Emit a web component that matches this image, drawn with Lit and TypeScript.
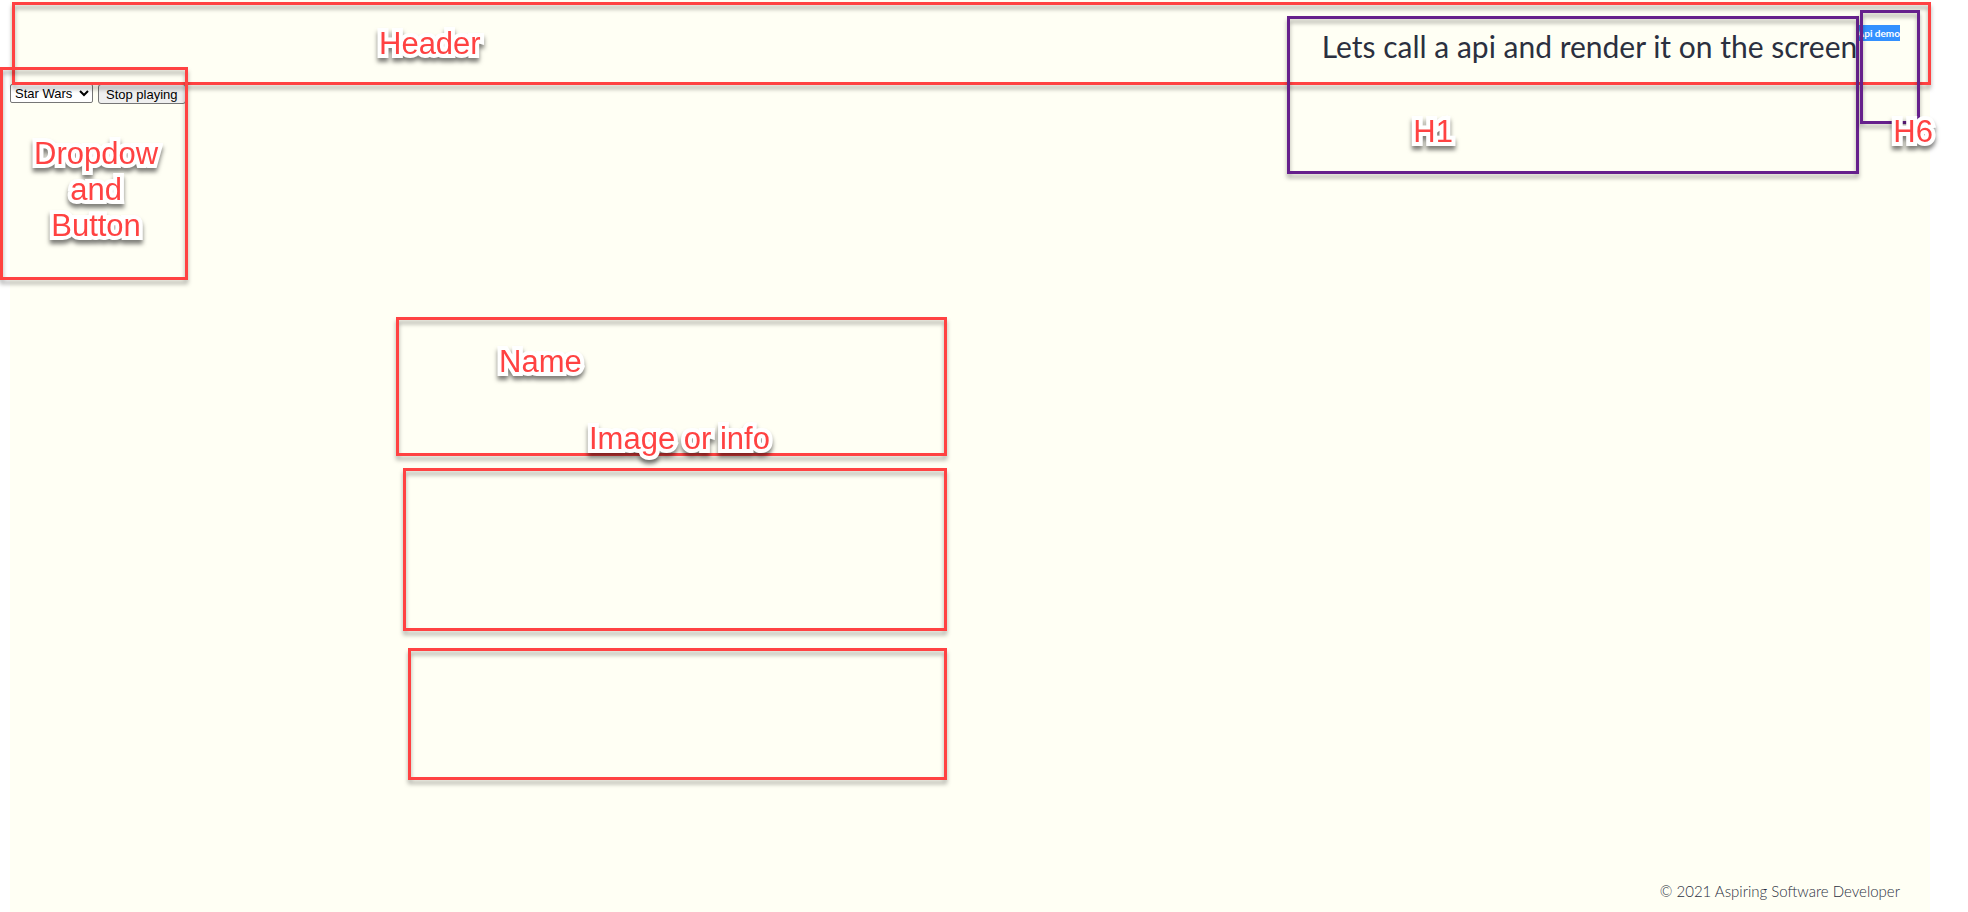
import { LitElement, html, css } from "lit";
import { customElement } from "lit/decorators.js";

@customElement("app-root")
export class AppRoot extends LitElement {
  static styles = css`
    :host {
      display: block;
      position: relative;
      min-height: 100vh;
      overflow: hidden;
      background: #fff;
      font-family: Lato, "Open Sans", sans-serif;
      color: #2b303f;
    }
    .page {
      display: flex;
      flex-direction: column;
      box-sizing: border-box;
      min-height: 100vh;
      margin: 0 38px 0 10px;
      background: #fffff4;
    }
    .top {
      display: flex;
      justify-content: flex-end;
      align-items: flex-start;
      box-sizing: border-box;
      min-height: 84px;
      padding: 25px 30px 0 0;
    }
    h1 {
      margin: 0;
      font-size: 30px;
      line-height: 42px;
      font-weight: 400;
    }
    h6 {
      margin: 0;
      font-size: 10px;
      line-height: 16px;
      font-weight: 700;
    }
    .selected {
      display: block;
      background: #3390ff;
      color: #fff;
    }
    .controls {
      display: flex;
      align-items: flex-start;
      gap: 5px;
      flex: 1;
    }
    select,
    button {
      margin: 0;
      box-sizing: border-box;
      font-family: "Liberation Sans", Arial, sans-serif;
      font-size: 13px;
      color: #000;
      border: 1px solid #767676;
    }
    select {
      width: 83px;
      height: 19px;
      padding: 0;
      border-radius: 2px;
      background: #fff;
    }
    button {
      height: 20px;
      padding: 0 7px;
      border-radius: 3px;
      background: #efefef;
    }
    footer {
      padding: 0 30px 9px 0;
      text-align: right;
      font-size: 15px;
      line-height: 24px;
      font-weight: 300;
    }

    /* Annotation layer drawn over the page */
    .notes {
      position: absolute;
      inset: 0;
      pointer-events: none;
    }
    .frame {
      position: absolute;
      box-sizing: border-box;
      border: 3px solid #ff4242;
      filter: drop-shadow(0 4px 2px rgba(0, 0, 0, 0.32));
    }
    .purple {
      border-color: #66208c;
    }
    .label {
      position: absolute;
      font-family: "Liberation Sans", Arial, sans-serif;
      font-size: 31px;
      line-height: 36px;
      text-align: center;
      white-space: nowrap;
      color: #ff4242;
      -webkit-text-stroke: 8px #fff;
      stroke-linejoin: round;
      paint-order: stroke fill;
      filter: drop-shadow(0 4px 2px rgba(0, 0, 0, 0.5));
    }
    .f-header { left: 12px; right: 37px; top: 2px; height: 83px; }
    .f-controls { left: 0; top: 67px; width: 188px; height: 213px; }
    .f-h1 { right: 109px; top: 16px; width: 572px; height: 158px; }
    .f-h6 { right: 48px; top: 10px; width: 60px; height: 114px; }
    .f-one { left: 396px; top: 317px; width: 551px; height: 139px; }
    .f-two { left: 403px; top: 468px; width: 544px; height: 163px; }
    .f-three { left: 408px; top: 648px; width: 539px; height: 132px; }
    .l-header { left: 379px; top: 26px; }
    .l-controls { left: 34px; top: 136px; }
    .l-h1 { right: 515px; top: 114px; }
    .l-h6 { right: 35px; top: 114px; }
    .l-name { left: 499px; top: 344px; }
    .l-info { left: 589px; top: 421px; }
  `;

  render() {
    return html`
      <div class="page">
        <header class="top">
          <h1>Lets call a api and render it on the screen</h1>
          <h6><span class="selected">Api demo</span></h6>
        </header>
        <main class="controls">
          <select aria-labelledby="controls-label">
            <option>Star Wars</option>
          </select>
          <button type="button">Stop playing</button>
        </main>
        <footer>© 2021 Aspiring Software Developer</footer>
      </div>
      <div class="notes">
        <div class="frame f-header"></div>
        <div class="frame f-controls"></div>
        <div class="frame purple f-h1"></div>
        <div class="frame purple f-h6"></div>
        <div class="frame f-one"></div>
        <div class="frame f-two"></div>
        <div class="frame f-three"></div>
        <div class="label l-header">Header</div>
        <div class="label l-controls" id="controls-label">Dropdow<br />and<br />Button</div>
        <div class="label l-h1">H1</div>
        <div class="label l-h6">H6</div>
        <div class="label l-name">Name</div>
        <div class="label l-info">Image or info</div>
      </div>
    `;
  }
}
